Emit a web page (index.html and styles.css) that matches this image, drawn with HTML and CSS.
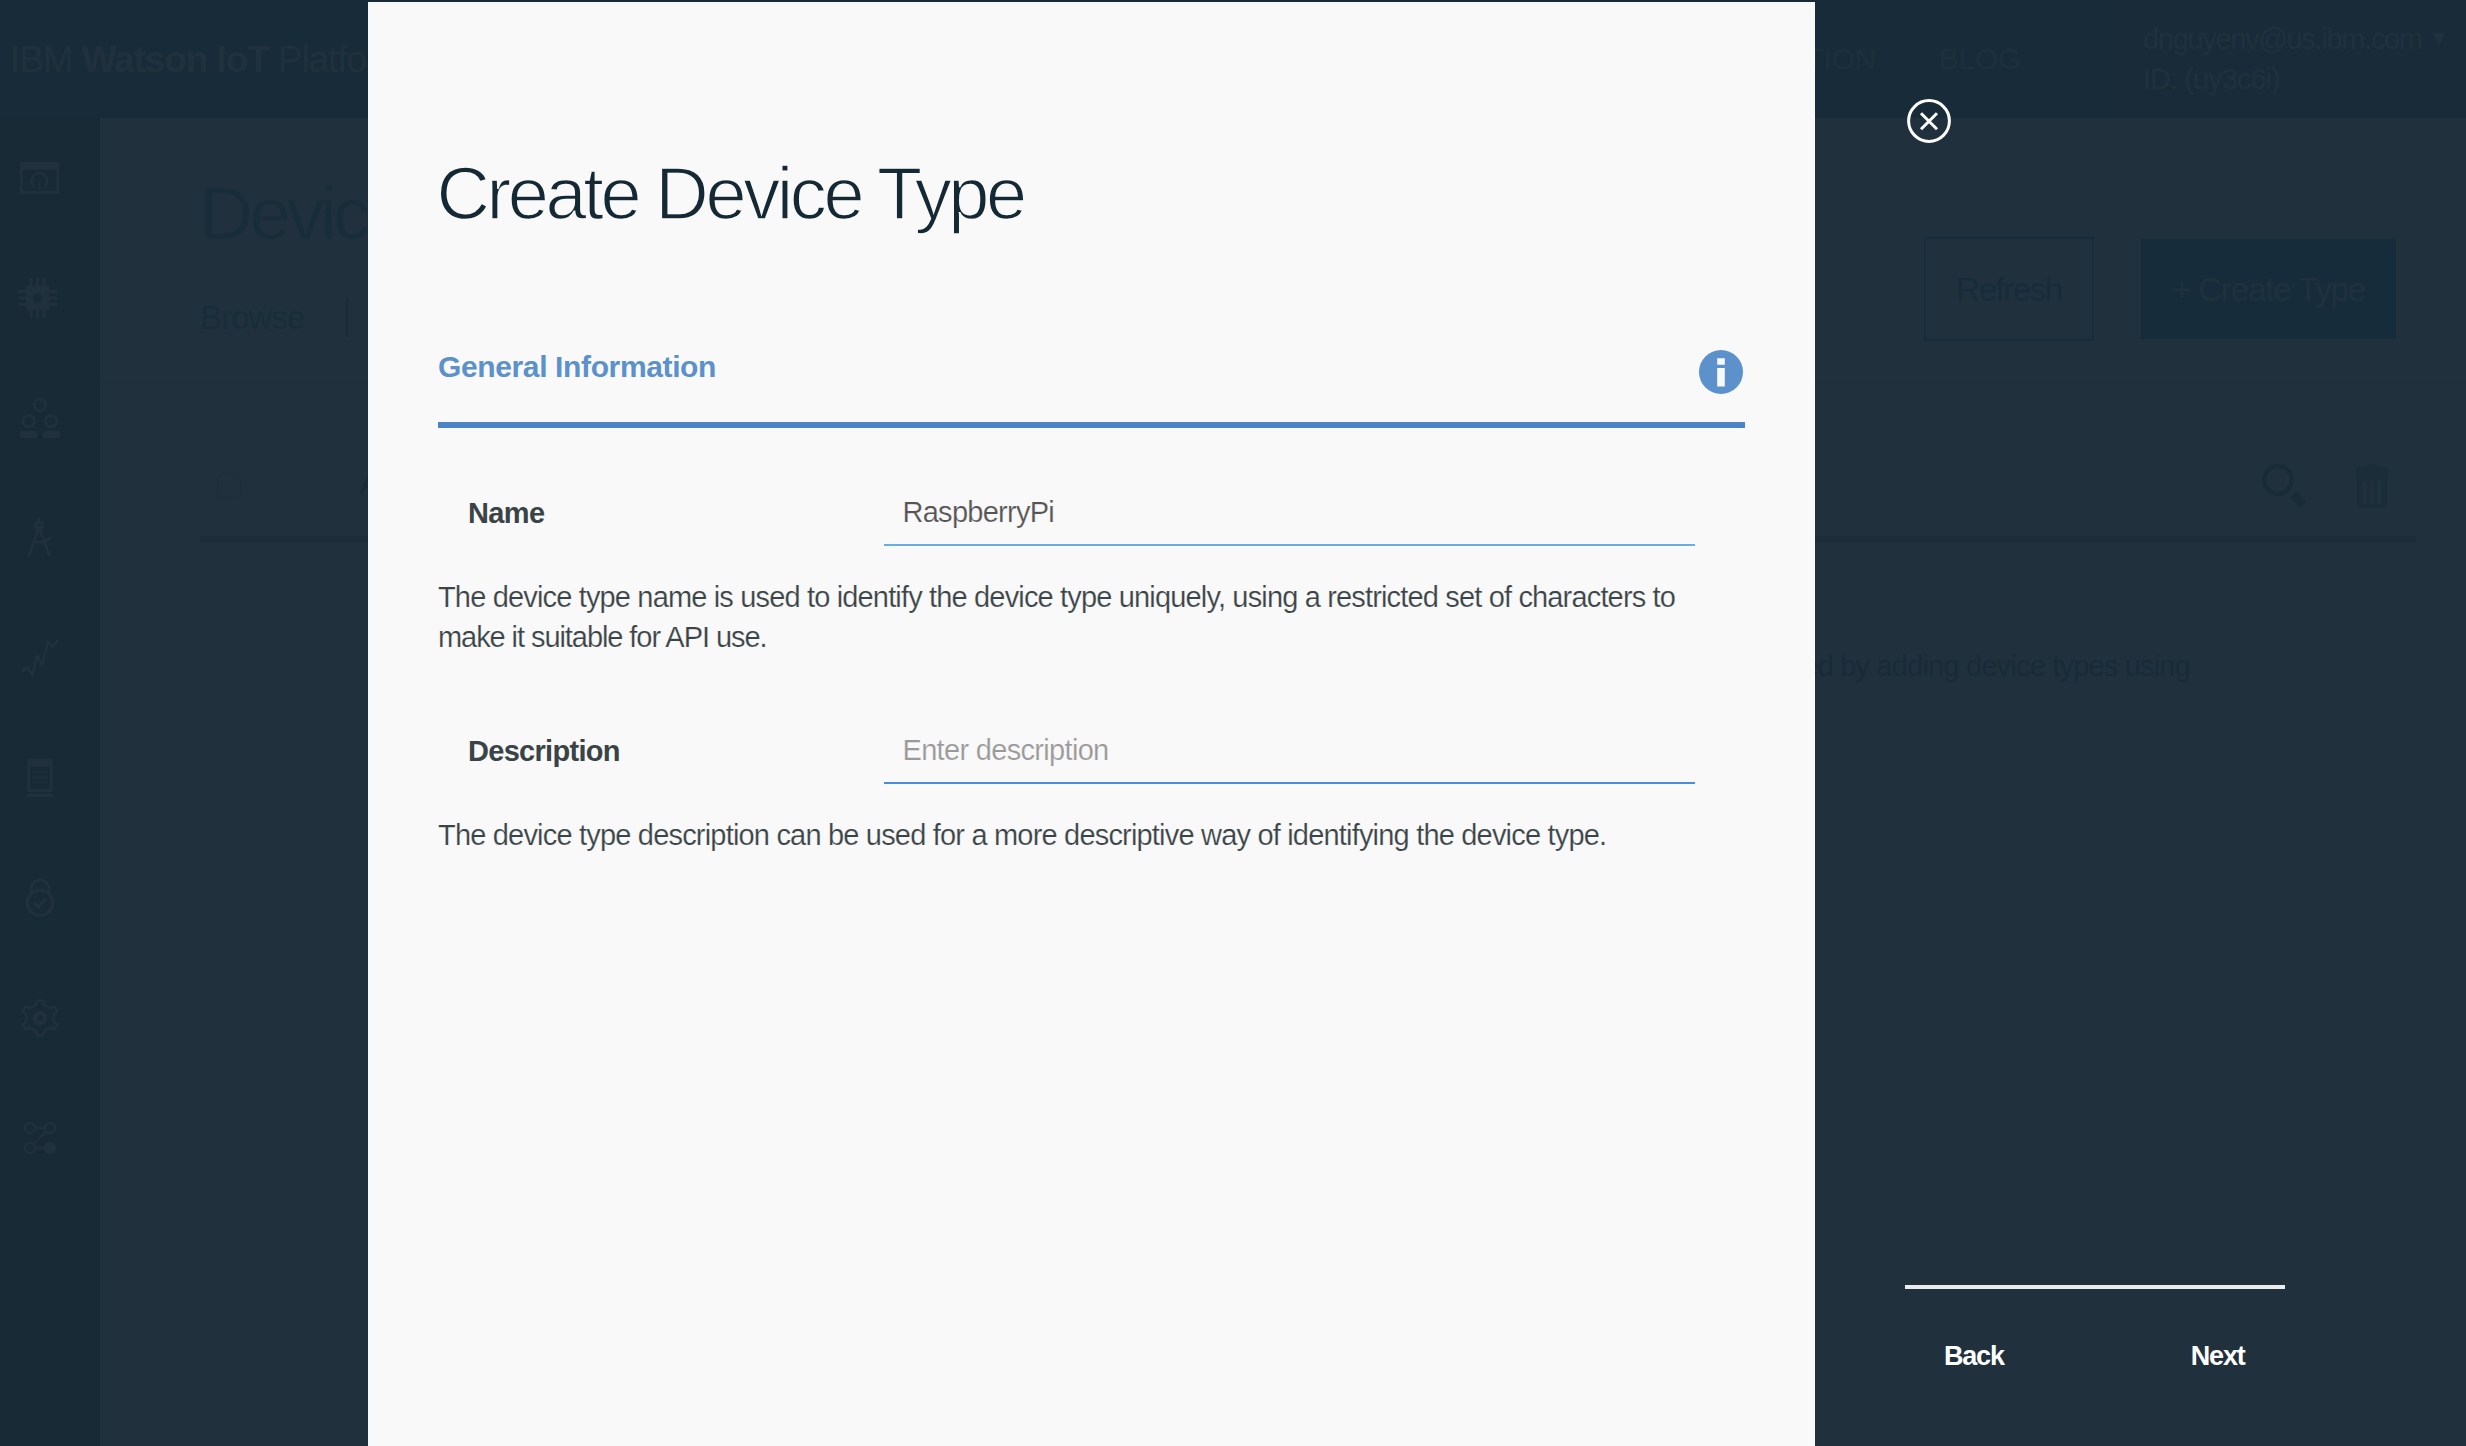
FILE: index.html
```
<!DOCTYPE html>
<html lang="en">
<head>
<meta charset="utf-8">
<title>IBM Watson IoT Platform</title>
<link rel="stylesheet" href="styles.css">
</head>
<body>
<div class="app">
  <header class="topbar">
    <div class="brand">IBM <b>Watson IoT</b> Platform</div>
    <nav class="topnav"><span>DOCUMENTATION</span><span>BLOG</span></nav>
    <div class="account">
      <div class="account-mail">dnguyenv@us.ibm.com<svg class="caret" viewBox="0 0 12 12"><path d="M0 0h12L6 12z"/></svg></div>
      <div class="account-id">ID: (uy3c6i)</div>
    </div>
  </header>
  <div class="body">
    <aside class="sidebar">
      <svg viewBox="0 0 100 120"><path class="f" fill-rule="evenodd" d="M20 44h39v32H20zM22.7 52v21h33.8V52z"/><path class="s" d="M34.6 69a7.8 7.8 0 1 1 9.8 0"/><path class="f" d="M39.5 61l1.3 10.5h-2.6z"/></svg>
      <svg viewBox="0 0 100 120"><path class="f" fill-rule="evenodd" d="M26 48h23v24H26zM37.5 55.2a4.8 4.8 0 1 0 0 9.6a4.8 4.8 0 1 0 0-9.6z"/><path class="s" stroke-width="3.2" d="M31 40v8M37.5 40v8M44 40v8M31 72v8M37.5 72v8M44 72v8M18 53.5h8M18 60h8M18 66.5h8M49 53.5h8M49 60h8M49 66.5h8"/></svg>
      <svg viewBox="0 0 100 120"><g class="s"><circle cx="40" cy="47" r="5.7"/><circle cx="28.7" cy="63" r="5.7"/><circle cx="51.3" cy="63" r="5.7"/></g><path class="f" d="M20 80v-5q0-2 2-2h13q2 0 2 2v5zM43 80v-5q0-2 2-2h13q2 0 2 2v5z"/></svg>
      <svg viewBox="0 0 100 120"><circle class="s" cx="39" cy="47.7" r="3.3" stroke-width="4"/><path class="s" d="M39 40v4M37.8 52L28.5 79M40.2 52L50 79M33 63.500c6 1.500 13 1 18-4.500"/></svg>
      <svg viewBox="0 0 100 120"><path class="s" d="M22 73.7l5.3-4.7 5 8 5-19 5 9L48 44l5 4.7 5.3-7"/></svg>
      <svg viewBox="0 0 100 120"><path class="f" fill-rule="evenodd" d="M27.3 41h25.4v33H27.3zM30 48.7V71h20V48.7zM27.3 76h25.4v3H27.3z"/><path class="s" stroke-width="1.2" d="M32.3 54.3h15.4M32.3 59.4h15.4M32.3 64.5h15.4"/></svg>
      <svg viewBox="0 0 100 120"><circle class="s" cx="40" cy="64.7" r="12.6" stroke-width="3.4"/><path class="s" stroke-width="3" d="M31 56.5V51a9 9 0 0 1 18 0v5.5"/><path class="s" stroke-width="3.4" d="M33.7 64.7l4.6 4.3 8-8.3"/></svg>
      <svg viewBox="0 0 100 120"><path class="s" stroke-width="2.4" d="M37 42.5h6l1.2 4.6 5.4 3.1 4.7-1.6 3 4.8-3.8 3.8v5.6l3.8 3.8-3 4.8-4.7-1.6-5.4 3.1-1.2 4.6h-6l-1.2-4.6-5.4-3.1-4.7 1.6-3-4.8 3.8-3.8v-5.6l-3.8-3.8 3-4.8 4.7 1.6 5.4-3.1z"/><circle class="s" cx="40" cy="60" r="5" stroke-width="4.6"/></svg>
      <svg viewBox="0 0 100 120"><g class="s" stroke-width="2.4"><circle cx="30" cy="50" r="5"/><circle cx="50" cy="50" r="5"/><circle cx="30" cy="70" r="5"/><path d="M35 50h10M46.5 53.5l-13 13M35 70h10"/></g><circle class="f" cx="50" cy="70" r="6.2"/></svg>
    </aside>
    <main class="main">
      <section class="page-head">
        <div>
          <h1 class="page-title">Devic</h1>
          <div class="tabs"><span>Browse</span><i class="tab-rule"></i></div>
        </div>
        <div class="actions">
          <span class="btn btn-outline">Refresh</span>
          <span class="btn btn-solid">+ Create Type</span>
        </div>
      </section>
      <section class="toolbar">
        <i class="checkbox"></i>
        <span class="toolbar-label">A</span>
        <svg class="search" viewBox="0 0 44 44"><circle cx="16" cy="16" r="13.8" fill="none" stroke="#182c37" stroke-width="4.4"/><path fill="#182c37" d="M34 27.7l10 10-6 6-10-10z"/></svg>
        <svg class="trash" viewBox="0 0 34 44"><path fill="#1a2d38" fill-rule="evenodd" d="M10.7 0h12.6v3h10v8.3h-1.6V44H2V11.300H.7V3h10zM7.300 17v23.300h4.400V17zM14.700 17v23.300H19V17zM22 17v23.300h4.300V17z"/></svg>
      </section>
      <p class="empty">ed by adding device types using</p>
    </main>
  </div>
</div>

<div class="overlay">
  <div class="panel">
    <h2 class="panel-title">Create Device Type</h2>
    <div class="section-head">
      <h3>General Information</h3>
      <svg class="info" viewBox="0 0 44 44"><circle cx="22" cy="22" r="22" fill="#5c91cb"/><path fill="#f9f9f9" d="M18.200 8.300h7.600v6.500h-7.600zM18.200 18h7.600v18.500h-7.600z"/></svg>
    </div>
    <div class="field">
      <span class="label name">Name</span>
      <div class="input">RaspberryPi</div>
    </div>
    <p class="help">The device type name is used to identify the device type uniquely, using a restricted set of characters to<br><span class="help-end">make it suitable for API use.</span></p>
    <div class="field second">
      <span class="label">Description</span>
      <div class="input placeholder">Enter description</div>
    </div>
    <p class="help last">The device type description can be used for a more descriptive way of identifying the device type.</p>
  </div>
  <div class="side">
    <svg class="close" viewBox="0 0 44 44"><g fill="none" stroke="#fff" stroke-width="3"><circle cx="22" cy="22" r="20.400"/><path d="M14 14.200l16 16M30 14.200l-16 16"/></g></svg>
    <div class="steps"><span>Back</span><span>Next</span></div>
  </div>
</div>
</body>
</html>
```
FILE: styles.css
```
* { box-sizing: border-box; }
html, body { margin: 0; height: 100%; }
body {
  position: relative;
  width: 2466px;
  height: 1446px;
  overflow: hidden;
  background: #20313d;
  font-family: "Liberation Sans", Arial, sans-serif;
  font-size: 29px;
  line-height: 40px;
}
h1, h2, h3, p { margin: 0; font-weight: 400; }
svg, i { display: block; flex: none; }

.app { display: flex; flex-direction: column; height: 1446px; white-space: nowrap; }

/* top bar */
.topbar { display: flex; height: 118px; background: #172c38; color: #20313d; }
.brand {
  width: 358px;
  margin-left: 10px;
  overflow: hidden;
  font-size: 37px;
  line-height: 120px;
  letter-spacing: -1.1px;
}
.topnav {
  display: flex;
  gap: 63px;
  margin-left: auto;
  padding-right: 91px;
  color: #1d303c;
  font-size: 30px;
  line-height: 118px;
  letter-spacing: -.3px;
}
.account {
  width: 354px;
  padding: 19px 0 0 31px;
  background: #192b39;
  letter-spacing: -1.3px;
}
.account-id { letter-spacing: -.96px; }
.account-mail { display: flex; }
.caret { width: 12px; height: 12px; margin: 14px 0 0 11px; fill: #20313d; }

.body { display: flex; flex: 1; }

/* side navigation */
.sidebar { display: flex; flex-direction: column; width: 100px; background: #172a35; }
.sidebar svg { width: 100px; height: 120px; }
.f { fill: #20313d; }
.s { fill: none; stroke: #20313d; }
.s:not([stroke-width]) { stroke-width: 2.7px; }

/* page behind the dialog */
.main { flex: 1; }
.page-head {
  display: flex;
  justify-content: space-between;
  height: 264px;
  padding: 54px 70px 0 99px;
  border-bottom: 1px solid #1e2f3b;
  color: #172d39;
}
.page-title {
  width: 168px;
  overflow: hidden;
  font-size: 75px;
  line-height: 82px;
  letter-spacing: -4px;
  -webkit-text-stroke: 1px #20313d;
}
.tabs {
  display: flex;
  gap: 42px;
  margin-top: 43px;
  padding-left: 1px;
  font-size: 33px;
  line-height: 42px;
  letter-spacing: -.94px;
}
.tab-rule { width: 2px; height: 40px; background: #182d3a; }
.actions { display: flex; gap: 47px; padding-top: 65px; font-size: 33px; }
.btn { display: flex; align-items: center; justify-content: center; }
.btn-outline {
  width: 170px;
  height: 104px;
  padding-top: 2px;
  border: 2px solid #172c3b;
  color: #172c3b;
  letter-spacing: -1.450px;
}
.btn-solid {
  width: 255px;
  height: 100px;
  margin-top: 2px;
  padding-top: 1px;
  background: #172c3b;
  color: #20313d;
  letter-spacing: -1.110px;
}
.toolbar {
  display: flex;
  align-items: center;
  height: 160px;
  margin: 0 50px 0 100px;
  padding: 53px 27px 0 17px;
  border-bottom: 6px solid #1d2e3a;
}
.checkbox { width: 24px; height: 24px; border: 1px solid #1d2e3a; border-radius: 5px; }
.toolbar-label { width: 8px; margin-left: 119px; padding-bottom: 3px; overflow: hidden; color: #192b38; }
.search { width: 44px; height: 44px; margin-left: auto; }
.trash { width: 34px; height: 44px; margin-left: 49px; }
.empty {
  margin: 104px 276px 0 0;
  color: #192b38;
  text-align: right;
  letter-spacing: -.81px;
}

/* dialog */
.overlay { position: absolute; inset: 2px 0 0 368px; display: flex; }
.panel { width: 1447px; padding: 152px 70px 0; background: #f9f9f9; color: #3a4447; }
.panel-title {
  margin-left: -1.500px;
  color: #152935;
  font-size: 74px;
  line-height: 80px;
  letter-spacing: -3.400px;
  -webkit-text-stroke: 1.500px #f9f9f9;
}
.section-head {
  display: flex;
  justify-content: space-between;
  height: 82px;
  margin-top: 112px;
  border-bottom: 6px solid #4a83c7;
}
.section-head h3 {
  padding-top: 1px;
  color: #5c91cb;
  font-size: 30px;
  font-weight: 700;
  letter-spacing: -.370px;
}
.info { width: 44px; height: 44px; margin: 4px 2px 0 0; }
.field { display: flex; margin-top: 64px; padding: 0 50px 0 30px; }
.field.second { margin-top: 73px; }
.label { width: 416px; padding-top: 1px; font-weight: 700; letter-spacing: -.7px; }
.label.name { letter-spacing: -.6px; }
.input {
  flex: 1;
  height: 54px;
  padding-left: 18.500px;
  border-bottom: 2px solid #68ade5;
  color: #555;
  letter-spacing: -.73px;
  -webkit-text-stroke: .2px #f9f9f9;
}
.input.placeholder { border-color: #4a8ce2; color: #999; letter-spacing: -.68px; }
.help {
  margin-top: 31px;
  white-space: nowrap;
  letter-spacing: -.84px;
  -webkit-text-stroke: .2px #f9f9f9;
}
.help-end { letter-spacing: -1.070px; }
.help.last { letter-spacing: -.81px; }

.side { display: flex; flex: 1; flex-direction: column; justify-content: space-between; padding: 97px 0 70px 90px; }
.close { width: 44px; height: 44px; margin-left: 2px; }
.steps {
  display: flex;
  justify-content: space-between;
  width: 380px;
  height: 91px;
  padding: 47px 40.500px 0 39px;
  border-top: 4px solid #ebebeb;
  color: #fff;
  font-size: 27px;
  font-weight: 700;
  letter-spacing: -1.200px;
}
```
